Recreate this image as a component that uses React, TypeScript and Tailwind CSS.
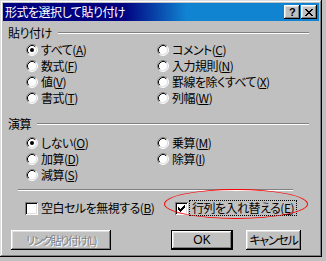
import React from 'react';

const font = "font-['Noto_Sans_CJK_JP',sans-serif] text-[12px] leading-[12px] tracking-[-0.5px] [font-feature-settings:'palt']";

const raised =
  'shadow-[inset_-1px_-1px_#000,inset_1px_1px_#fff,inset_-2px_-2px_#808080,inset_2px_2px_#dfdfdf]';

const Radio: React.FC<{ checked?: boolean }> = ({ checked }) => (
  <svg width="12" height="12" viewBox="0 0 12 12" className="shrink-0">
    <circle cx="6" cy="6" r="5" fill="#fff" />
    <path d="M2.11 9.89 A5.5 5.5 0 0 1 9.89 2.11" stroke="#808080" fill="none" />
    <path d="M9.89 2.11 A5.5 5.5 0 0 1 2.11 9.89" stroke="#fff" fill="none" />
    <path d="M2.82 9.18 A4.5 4.5 0 0 1 9.18 2.82" stroke="#000" fill="none" />
    <path d="M9.18 2.82 A4.5 4.5 0 0 1 2.82 9.18" stroke="#dfdfdf" fill="none" />
    {checked && <circle cx="6" cy="6" r="2" fill="#000" />}
  </svg>
);

const Checkbox: React.FC<{ checked?: boolean }> = ({ checked }) => (
  <div className="w-[13px] h-[13px] shrink-0 bg-white shadow-[inset_1px_1px_#808080,inset_-1px_-1px_#fff,inset_2px_2px_#000,inset_-2px_-2px_#dfdfdf] flex items-center justify-center">
    {checked && (
      <svg width="7" height="7" viewBox="0 0 7 7" shapeRendering="crispEdges">
        <path d="M0 2h1v3h-1zM1 3h1v3h-1zM2 4h1v3h-1zM3 3h1v3h-1zM4 2h1v3h-1zM5 1h1v3h-1zM6 0h1v3h-1z" fill="#000" />
      </svg>
    )}
  </div>
);

const Label: React.FC<{ text: string; k: string }> = ({ text, k }) => (
  <span className="whitespace-nowrap">
    {text}(<u className="underline-offset-[1px]">{k}</u>)
  </span>
);

const RadioItem: React.FC<{ text: string; k: string; checked?: boolean }> = ({ text, k, checked }) => (
  <div className="flex items-center h-[16px]">
    <Radio checked={checked} />
    <span className="ml-[3px]">
      <Label text={text} k={k} />
    </span>
  </div>
);

const GroupHeader: React.FC<{ title: string; className?: string }> = ({ title, className }) => (
  <div className={`flex items-center h-[12px] pl-[5px] pr-[10px] ${className ?? ''}`}>
    <span>{title}</span>
    <div className="ml-[6px] flex-1 h-[2px] border-t border-t-[#808080] border-b border-b-white" />
  </div>
);

export default function App() {
  return (
    <div className={`w-[326px] h-[261px] bg-[#c0c0c0] text-black ${font}`}>
      <div className="w-[322px] h-[257px] p-[3px] bg-[#c0c0c0] flex flex-col shadow-[inset_-1px_-1px_#000,inset_1px_1px_#dfdfdf,inset_-2px_-2px_#808080,inset_2px_2px_#fff]">
        {/* title bar */}
        <div className="h-[18px] shrink-0 flex items-center pl-[2px] pr-[2px] bg-[linear-gradient(to_right,#000080_38%,#1084d0_58%)]">
          <span className="text-white">形式を選択して貼り付け</span>
          <div className="ml-auto flex gap-[1px]">
            <div className={`w-[16px] h-[14px] bg-[#c0c0c0] ${raised} flex items-center justify-center`}>
              <span className="font-['Liberation_Sans',sans-serif] font-bold text-[11px] leading-[11px] mt-[1px]">?</span>
            </div>
            <div className={`w-[16px] h-[14px] bg-[#c0c0c0] ${raised} flex items-center justify-center`}>
              <svg width="8" height="7" viewBox="0 0 8 7" shapeRendering="crispEdges">
                <path d="M0 0h2v1h-2zM6 0h2v1h-2zM1 1h2v1h-2zM5 1h2v1h-2zM2 2h4v1h-4zM3 3h2v1h-2zM2 4h4v1h-4zM1 5h2v1h-2zM5 5h2v1h-2zM0 6h2v1h-2zM6 6h2v1h-2z" fill="#000" />
              </svg>
            </div>
          </div>
        </div>

        {/* 貼り付け */}
        <GroupHeader title="貼り付け" className="mt-[6px]" />
        <div className="grid grid-cols-[131px_1fr] pl-[23px] mt-[3px]">
          <RadioItem text="すべて" k="A" checked />
          <RadioItem text="コメント" k="C" />
          <RadioItem text="数式" k="F" />
          <RadioItem text="入力規則" k="N" />
          <RadioItem text="値" k="V" />
          <RadioItem text="罫線を除くすべて" k="X" />
          <RadioItem text="書式" k="T" />
          <RadioItem text="列幅" k="W" />
        </div>

        {/* 演算 */}
        <GroupHeader title="演算" className="mt-[12px]" />
        <div className="grid grid-cols-[131px_1fr] pl-[23px] mt-[5px]">
          <RadioItem text="しない" k="O" checked />
          <RadioItem text="乗算" k="M" />
          <RadioItem text="加算" k="D" />
          <RadioItem text="除算" k="I" />
          <RadioItem text="減算" k="S" />
        </div>

        <div className="mt-[6px] ml-[15px] w-[275px] h-[2px] border-t border-t-[#808080] border-b border-b-white" />

        {/* checkboxes */}
        <div className="mt-[9px] h-[15px] grid grid-cols-[150px_1fr] items-center pl-[22px]">
          <div className="flex items-center">
            <Checkbox />
            <span className="ml-[3px]">
              <Label text="空白セルを無視する" k="B" />
            </span>
          </div>
          <div className="relative flex items-center">
            <Checkbox checked />
            <span className="ml-[1px] px-[2px] py-[1px] border border-dotted border-black">
              <Label text="行列を入れ替える" k="E" />
            </span>
            <div className="absolute left-[-11px] top-[-11px] w-[144px] h-[30px] rounded-[50%] border border-[#ff0000] pointer-events-none" />
          </div>
        </div>

        {/* buttons */}
        <div className="mt-[15px] h-[20px] flex pl-[8px] pr-[18px]">
          <div className={`w-[100px] h-[20px] ${raised} flex items-center justify-center`}>
            <span className="text-[#808080] [text-shadow:1px_1px_#fff] text-[11px] tracking-[-1.4px] whitespace-nowrap">リンク貼り付け(L)</span>
          </div>
          <div className="ml-auto w-[62px] h-[20px] border border-black">
            <div className={`w-full h-full ${raised} flex items-center justify-center`}>
              <span className="font-['Liberation_Sans',sans-serif] tracking-normal">OK</span>
            </div>
          </div>
          <div className={`ml-[13px] w-[55px] h-[20px] ${raised} flex items-center justify-center`}>
            <span className="tracking-[-1.2px] whitespace-nowrap">キャンセル</span>
          </div>
        </div>
      </div>
    </div>
  );
}
